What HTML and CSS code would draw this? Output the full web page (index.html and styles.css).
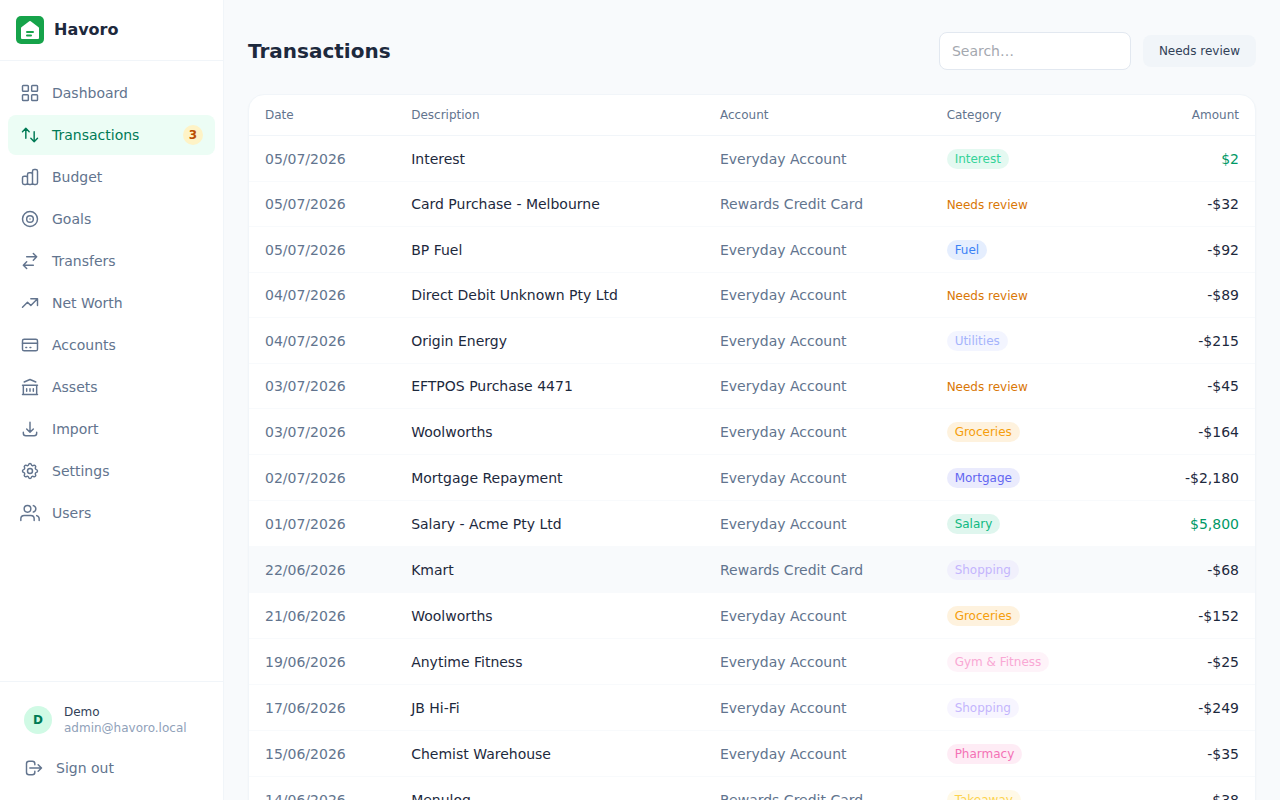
FILE: index.html
```
<!DOCTYPE html>
<html lang="en">
<head>
    <meta charset="utf-8">
    <meta name="viewport" content="width=device-width, initial-scale=1">
    <title>Transactions - Havoro</title>
    <link rel="stylesheet" href="styles.css">
</head>
<body>
    <aside class="sidebar">
        <div class="brand">
            <svg class="logo" viewBox="0 0 28 28" aria-hidden="true">
                <rect width="28" height="28" rx="5" fill="#16a34a"/>
                <path d="M13.3 5.3a1.2 1.2 0 0 1 1.4 0l7.6 5.6a1.5 1.5 0 0 1 .7 1.200V22a1 1 0 0 1-1 1H6a1 1 0 0 1-1-1v-9.900a1.500 1.500 0 0 1 .7-1.200z" fill="#fff"/>
                <path d="M11 16h6M11 19.500h4" stroke="#16a34a" stroke-width="2" stroke-linecap="round"/>
            </svg>
            <span>Havoro</span>
        </div>

        <nav class="nav">
            <a href="#">
                <svg class="icon" viewBox="0 0 24 24"><rect x="3" y="3" width="7" height="7" rx="1"/><rect x="14" y="3" width="7" height="7" rx="1"/><rect x="3" y="14" width="7" height="7" rx="1"/><rect x="14" y="14" width="7" height="7" rx="1"/></svg>
                <span>Dashboard</span>
            </a>
            <a href="#" class="active">
                <svg class="icon" viewBox="0 0 24 24"><path d="M7 16V4m0 0L3 8m4-4l4 4m6 0v12m0 0l4-4m-4 4l-4-4"/></svg>
                <span>Transactions</span>
                <span class="count">3</span>
            </a>
            <a href="#">
                <svg class="icon" viewBox="0 0 24 24"><path d="M9 19v-6a2 2 0 0 0-2-2H5a2 2 0 0 0-2 2v6a2 2 0 0 0 2 2h2a2 2 0 0 0 2-2zm0 0V9a2 2 0 0 1 2-2h2a2 2 0 0 1 2 2v10m-6 0a2 2 0 0 0 2 2h2a2 2 0 0 0 2-2m0 0V5a2 2 0 0 1 2-2h2a2 2 0 0 1 2 2v14a2 2 0 0 1-2 2h-2a2 2 0 0 1-2-2z"/></svg>
                <span>Budget</span>
            </a>
            <a href="#">
                <svg class="icon" viewBox="0 0 24 24"><circle cx="12" cy="12" r="9"/><circle cx="12" cy="12" r="4"/><path d="M12 12h.01"/></svg>
                <span>Goals</span>
            </a>
            <a href="#">
                <svg class="icon" viewBox="0 0 24 24"><path d="M8 7h12m0 0l-4-4m4 4l-4 4m0 6H4m0 0l4 4m-4-4l4-4"/></svg>
                <span>Transfers</span>
            </a>
            <a href="#">
                <svg class="icon" viewBox="0 0 24 24"><path d="M13 7h8m0 0v8m0-8l-8 8-4-4-6 6"/></svg>
                <span>Net Worth</span>
            </a>
            <a href="#">
                <svg class="icon" viewBox="0 0 24 24"><rect x="3" y="5" width="18" height="14" rx="2"/><path d="M3 10h18M7 15h1m4 0h1"/></svg>
                <span>Accounts</span>
            </a>
            <a href="#">
                <svg class="icon" viewBox="0 0 24 24"><path d="M3 21h18M3 10h18M5 6l7-3 7 3M4 10v11M20 10v11M8 14v3M12 14v3M16 14v3"/></svg>
                <span>Assets</span>
            </a>
            <a href="#">
                <svg class="icon" viewBox="0 0 24 24"><path d="M4 16v1a3 3 0 0 0 3 3h10a3 3 0 0 0 3-3v-1m-4-4l-4 4m0 0l-4-4m4 4V4"/></svg>
                <span>Import</span>
            </a>
            <a href="#">
                <svg class="icon" viewBox="0 0 24 24"><path d="M10.325 4.317c.426-1.756 2.924-1.756 3.35 0a1.724 1.724 0 0 0 2.573 1.066c1.543-.94 3.31.826 2.37 2.37a1.724 1.724 0 0 0 1.065 2.572c1.756.426 1.756 2.924 0 3.35a1.724 1.724 0 0 0-1.066 2.573c.94 1.543-.826 3.31-2.37 2.37a1.724 1.724 0 0 0-2.572 1.065c-.426 1.756-2.924 1.756-3.35 0a1.724 1.724 0 0 0-2.573-1.066c-1.543.94-3.31-.826-2.37-2.37a1.724 1.724 0 0 0-1.065-2.572c-1.756-.426-1.756-2.924 0-3.35a1.724 1.724 0 0 0 1.066-2.573c-.94-1.543.826-3.31 2.37-2.37.996.608 2.296.07 2.572-1.065z"/><circle cx="12" cy="12" r="3"/></svg>
                <span>Settings</span>
            </a>
            <a href="#">
                <svg class="icon" viewBox="0 0 24 24"><path d="M17 21v-2a4 4 0 0 0-4-4H5a4 4 0 0 0-4 4v2M23 21v-2a4 4 0 0 0-3-3.870M16 3.130a4 4 0 0 1 0 7.750"/><circle cx="9" cy="7" r="4"/></svg>
                <span>Users</span>
            </a>
        </nav>

        <div class="account">
            <div class="user">
                <div class="avatar">D</div>
                <div class="user-info">
                    <div class="user-name">Demo</div>
                    <div class="user-email">admin@havoro.local</div>
                </div>
            </div>
            <button class="sign-out" type="button">
                <svg class="icon" viewBox="0 0 24 24"><path d="M17 16l4-4m0 0l-4-4m4 4H7m6 4v1a3 3 0 0 1-3 3H6a3 3 0 0 1-3-3V7a3 3 0 0 1 3-3h4a3 3 0 0 1 3 3v1"/></svg>
                <span>Sign out</span>
            </button>
        </div>
    </aside>

    <main class="main">
        <header class="page-header">
            <h1>Transactions</h1>
            <div class="actions">
                <input class="search" type="search" placeholder="Search…" aria-label="Search transactions">
                <button class="filter" type="button">Needs review</button>
            </div>
        </header>

        <div class="card">
            <table class="transactions">
                <thead>
                    <tr>
                        <th class="col-date">Date</th>
                        <th class="col-description">Description</th>
                        <th class="col-account">Account</th>
                        <th>Category</th>
                        <th class="amount">Amount</th>
                    </tr>
                </thead>
                <tbody>
                    <tr><td>05/07/2026</td><td class="description">Interest</td><td>Everyday Account</td><td><span class="badge interest">Interest</span></td><td class="amount income">$2</td></tr>
                    <tr><td>05/07/2026</td><td class="description">Card Purchase - Melbourne</td><td>Rewards Credit Card</td><td><button class="review" type="button">Needs review</button></td><td class="amount">-$32</td></tr>
                    <tr><td>05/07/2026</td><td class="description">BP Fuel</td><td>Everyday Account</td><td><span class="badge fuel">Fuel</span></td><td class="amount">-$92</td></tr>
                    <tr><td>04/07/2026</td><td class="description">Direct Debit Unknown Pty Ltd</td><td>Everyday Account</td><td><button class="review" type="button">Needs review</button></td><td class="amount">-$89</td></tr>
                    <tr><td>04/07/2026</td><td class="description">Origin Energy</td><td>Everyday Account</td><td><span class="badge utilities">Utilities</span></td><td class="amount">-$215</td></tr>
                    <tr><td>03/07/2026</td><td class="description">EFTPOS Purchase 4471</td><td>Everyday Account</td><td><button class="review" type="button">Needs review</button></td><td class="amount">-$45</td></tr>
                    <tr><td>03/07/2026</td><td class="description">Woolworths</td><td>Everyday Account</td><td><span class="badge groceries">Groceries</span></td><td class="amount">-$164</td></tr>
                    <tr><td>02/07/2026</td><td class="description">Mortgage Repayment</td><td>Everyday Account</td><td><span class="badge mortgage">Mortgage</span></td><td class="amount">-$2,180</td></tr>
                    <tr><td>01/07/2026</td><td class="description">Salary - Acme Pty Ltd</td><td>Everyday Account</td><td><span class="badge salary">Salary</span></td><td class="amount income">$5,800</td></tr>
                    <tr class="highlighted"><td>22/06/2026</td><td class="description">Kmart</td><td>Rewards Credit Card</td><td><span class="badge shopping">Shopping</span></td><td class="amount">-$68</td></tr>
                    <tr><td>21/06/2026</td><td class="description">Woolworths</td><td>Everyday Account</td><td><span class="badge groceries">Groceries</span></td><td class="amount">-$152</td></tr>
                    <tr><td>19/06/2026</td><td class="description">Anytime Fitness</td><td>Everyday Account</td><td><span class="badge fitness">Gym &amp; Fitness</span></td><td class="amount">-$25</td></tr>
                    <tr><td>17/06/2026</td><td class="description">JB Hi-Fi</td><td>Everyday Account</td><td><span class="badge shopping">Shopping</span></td><td class="amount">-$249</td></tr>
                    <tr><td>15/06/2026</td><td class="description">Chemist Warehouse</td><td>Everyday Account</td><td><span class="badge pharmacy">Pharmacy</span></td><td class="amount">-$35</td></tr>
                    <tr><td>14/06/2026</td><td class="description">Menulog</td><td>Rewards Credit Card</td><td><span class="badge takeaway">Takeaway</span></td><td class="amount">-$38</td></tr>
                </tbody>
            </table>
        </div>
    </main>
</body>
</html>
```
FILE: styles.css
```
* {
    box-sizing: border-box;
}
body {
    display: flex;
    height: 100vh;
    margin: 0;
    overflow: hidden;
    background-color: #f8fafc;
    color: #1d293d;
    font-family: "DejaVu Sans", sans-serif;
    font-size: 14px;
    line-height: 20px;
}
button, input {
    font-family: inherit;
}
button {
    border: none;
    cursor: pointer;
}

/* Sidebar */
.sidebar {
    display: flex;
    flex-direction: column;
    flex-shrink: 0;
    width: 224px;
    background-color: #fff;
    border-right: 1px solid #f1f5f9;
}
.brand {
    display: flex;
    align-items: center;
    gap: 10px;
    padding: 16px;
    border-bottom: 1px solid #f1f5f9;
    font-size: 16px;
    font-weight: bold;
    line-height: 28px;
}
.logo {
    width: 28px;
    height: 28px;
}
.nav {
    display: flex;
    flex: 1;
    flex-direction: column;
    gap: 2px;
    padding: 12px 8px;
}
.nav a {
    display: flex;
    align-items: center;
    gap: 12px;
    padding: 10px 12px;
    border-radius: 8px;
    color: #62748e;
    text-decoration: none;
}
.nav a.active {
    background-color: #ecfdf5;
    color: #007a55;
}
.icon {
    width: 20px;
    height: 20px;
    fill: none;
    stroke: currentColor;
    stroke-width: 1.75;
    stroke-linecap: round;
    stroke-linejoin: round;
}
.count {
    min-width: 20px;
    margin-left: auto;
    border-radius: 10px;
    background-color: #fef3c6;
    color: #bb4d00;
    font-size: 12px;
    font-weight: bold;
    text-align: center;
}
.account {
    padding: 12px;
    border-top: 1px solid #f1f5f9;
}
.user {
    display: flex;
    align-items: center;
    gap: 12px;
    padding: 10px 12px;
    font-size: 12px;
    line-height: 16px;
}
.avatar {
    width: 28px;
    border-radius: 50%;
    background-color: #d0fae5;
    color: #007a55;
    font-weight: bold;
    line-height: 28px;
    text-align: center;
}
.user-name {
    color: #314158;
}
.user-email {
    color: #90a1b9;
}
.sign-out {
    display: flex;
    align-items: center;
    gap: 12px;
    width: 100%;
    margin-top: 2px;
    padding: 10px 12px;
    background: none;
    color: #62748e;
    font-size: 14px;
    line-height: 20px;
}

/* Page */
.main {
    flex: 1;
    min-width: 0;
    padding: 32px 24px;
    overflow-y: auto;
    scrollbar-width: none;
}
.page-header {
    display: flex;
    align-items: center;
    justify-content: space-between;
    margin-bottom: 24px;
}
h1 {
    margin: 0;
    font-size: 20px;
    line-height: 28px;
}
.actions {
    display: flex;
    align-items: center;
    gap: 12px;
}
.search {
    width: 192px;
    padding: 8px 12px;
    border: 1px solid #e2e8f0;
    border-radius: 8px;
    background-color: #fff;
    color: #1d293d;
    font-size: 14px;
    line-height: 20px;
}
.search::placeholder {
    color: #a4a8af;
}
.filter {
    padding: 8px 16px;
    border-radius: 8px;
    background-color: #f1f5f9;
    color: #314158;
    font-size: 12px;
    line-height: 16px;
}

/* Transactions table */
.card {
    overflow: hidden;
    border: 1px solid #f1f5f9;
    border-radius: 16px;
    background-color: #fff;
    box-shadow: 0 1px 2px rgba(0, 0, 0, 0.04);
}
.transactions {
    width: 100%;
    border-spacing: 0;
    table-layout: fixed;
}
.transactions th {
    padding: 12px 16px;
    border-bottom: 1px solid #f1f5f9;
    color: #62748e;
    font-size: 12px;
    font-weight: normal;
    line-height: 16px;
    text-align: left;
}
.transactions td {
    padding: 12px 16px;
    border-bottom: 1px solid #f8fafc;
    color: #62748e;
}
.transactions .col-date {
    width: 14.53%;
}
.transactions .col-description {
    width: 30.7%;
}
.transactions .col-account {
    width: 22.53%;
}
.transactions .description {
    color: #1d293d;
}
.transactions .amount {
    text-align: right;
}
.transactions td.amount {
    color: #1d293d;
}
.transactions td.income {
    color: #009966;
}
.highlighted {
    background-color: #f8fafc;
}
.review {
    padding: 0;
    background: none;
    color: #d97706;
    font-size: 12px;
    line-height: 16px;
}
.badge {
    display: inline-block;
    padding: 2px 8px;
    border-radius: 10px;
    font-size: 12px;
    line-height: 16px;
}
.interest {
    background-color: #34d39922;
    color: #34d399;
}
.fuel {
    background-color: #3b82f622;
    color: #3b82f6;
}
.utilities {
    background-color: #a5b4fc22;
    color: #a5b4fc;
}
.groceries {
    background-color: #f59e0b22;
    color: #f59e0b;
}
.mortgage {
    background-color: #6366f122;
    color: #6366f1;
}
.salary {
    background-color: #10b98122;
    color: #10b981;
}
.shopping {
    background-color: #c4b5fd22;
    color: #c4b5fd;
}
.fitness {
    background-color: #f9a8d422;
    color: #f9a8d4;
}
.pharmacy {
    background-color: #f472b622;
    color: #f472b6;
}
.takeaway {
    background-color: #fcd34d22;
    color: #fcd34d;
}
```
